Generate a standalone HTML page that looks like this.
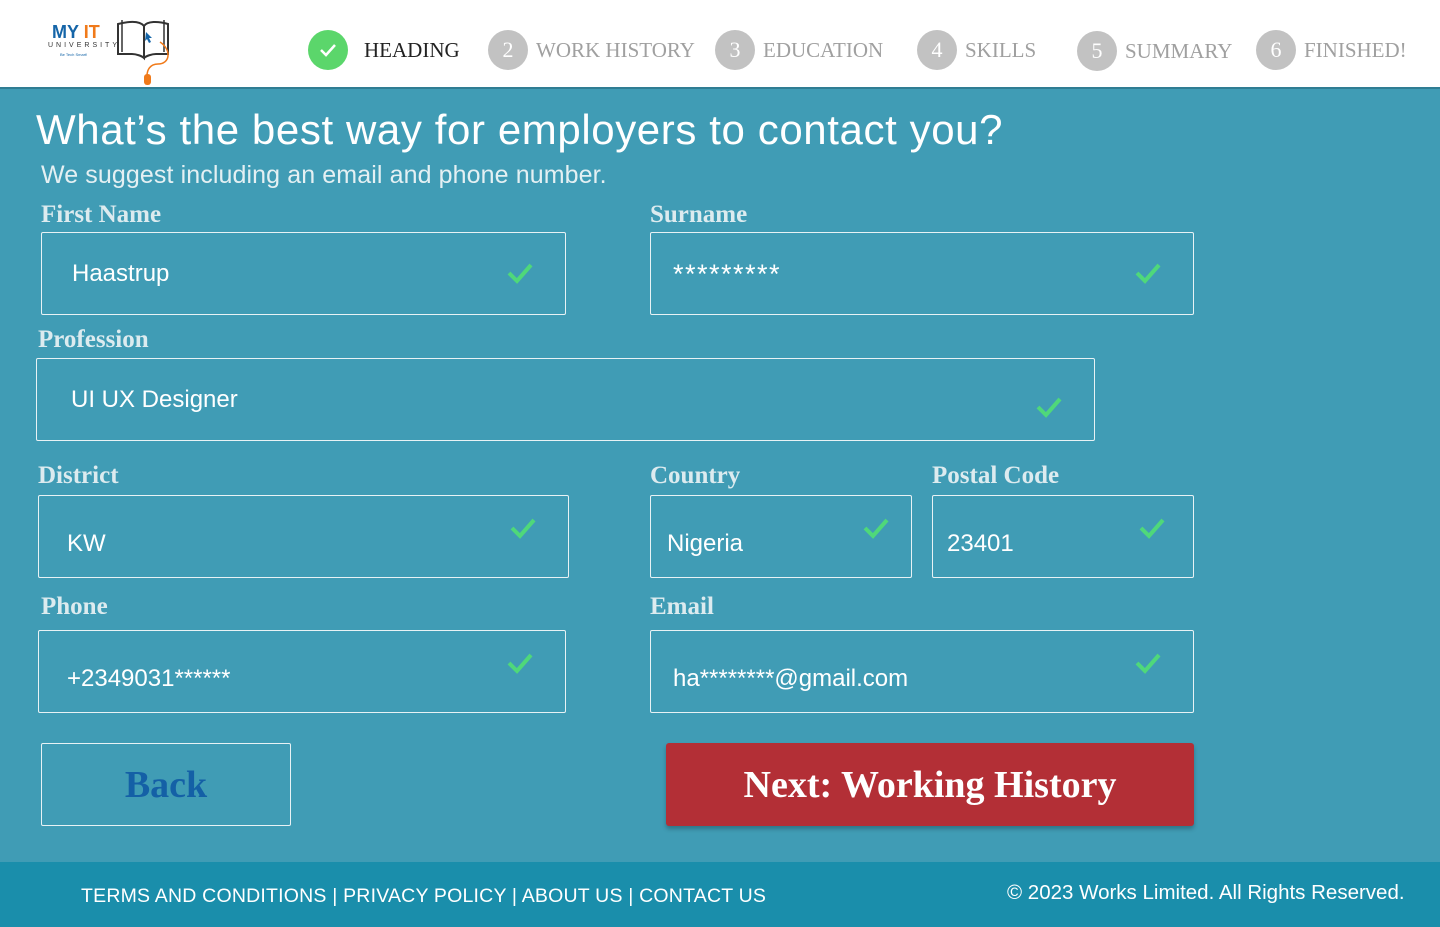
<!DOCTYPE html>
<html><head><style>
*{margin:0;padding:0;box-sizing:border-box}
body{width:1440px;height:927px;overflow:hidden;background:#409cb5;font-family:"Liberation Sans",sans-serif;position:relative}
.hdr{position:absolute;left:0;top:0;width:1440px;height:89px;background:#fff;border-bottom:2px solid #2f7d93}
.step{position:absolute;top:30px;height:40px;display:flex;align-items:center;font-family:"Liberation Serif",serif;font-size:21px;color:#a0a0a0}
.step .c{width:40px;height:40px;border-radius:50%;background:#c2c2c2;color:#fff;display:flex;align-items:center;justify-content:center;font-size:22px;margin-right:8px}
.abs{position:absolute}
.lbl{position:absolute;font-family:"Liberation Serif",serif;font-weight:bold;font-size:25px;color:#dcebef;margin-top:2px}
.in{position:absolute;border:1px solid #e8f2f5;border-radius:2px;color:#fff;font-size:24px;display:flex;align-items:center;padding-left:30px}
.ck{position:absolute;right:32px;top:50%;margin-top:-12px}
.foot{position:absolute;left:0;top:862px;width:1440px;height:65px;background:#1a8eab;color:#fff;font-size:20px}
</style></head><body>
<div class="hdr">
 <div class="abs" style="left:52px;top:22px;font-weight:bold;font-size:18px;color:#1565a8">MY <span style="color:#f07a1a">IT</span></div>
 <div class="abs" style="left:48px;top:42px;font-size:7px;letter-spacing:3px;color:#333">UNIVERSITY</div>
 <div class="abs" style="left:60px;top:52px;font-size:4px;color:#1565a8">Be Tech Smart!</div>
 <svg class="abs" style="left:115px;top:18px" width="60" height="70" viewBox="0 0 60 70"><path d="M3 6v30h14c4 0 10 2 12 4V8C25 3 15 3 3 6zM29 8c3-5 14-5 24-2v30H41c-4 0-10 2-12 4" fill="none" stroke="#333" stroke-width="2"/><path d="M7 2v32M49 2v32" stroke="#333" stroke-width="1.5"/><path d="M31 14l6 6-3 0 2 4-2 1-2-4-2 2z" fill="#1565a8"/><path d="M45 24c12 8 10 22 -2 22c-8 0-11 6-11 12" fill="none" stroke="#f07a1a" stroke-width="1.5"/><rect x="29" y="56" width="7" height="11" rx="3" fill="#f07a1a"/></svg>
 <div class="step" style="left:308px;color:#222"><div class="c" style="background:#5bd66b"><svg width="18" height="14"><path d="M2 7l5 5 9-10" stroke="#fff" stroke-width="2.5" fill="none"/></svg></div><span style="margin-left:8px">HEADING</span></div>
 <div class="step" style="left:488px"><div class="c">2</div>WORK HISTORY</div>
 <div class="step" style="left:715px"><div class="c">3</div>EDUCATION</div>
 <div class="step" style="left:917px"><div class="c">4</div>SKILLS</div>
 <div class="step" style="left:1077px;top:31px"><div class="c">5</div>SUMMARY</div>
 <div class="step" style="left:1256px"><div class="c">6</div>FINISHED!</div>
</div>
<div class="abs" style="left:36px;top:106px;font-size:42px;letter-spacing:0.6px;color:#fff">What’s the best way for employers to contact you?</div>
<div class="abs" style="left:41px;top:161px;font-size:25px;letter-spacing:0.1px;color:#e4f0f3">We suggest including an email and phone number.</div>

<div class="lbl" style="left:41px;top:199px">First Name</div>
<div class="in" style="left:41px;top:232px;width:525px;height:83px">Haastrup<svg class="ck" width="26" height="22"><path d="M2 11l8 8 14-16" stroke="#4fd87a" stroke-width="4" fill="none"/></svg></div>
<div class="lbl" style="left:650px;top:199px">Surname</div>
<div class="in" style="left:650px;top:232px;width:544px;height:83px;padding-left:22px;align-items:flex-start;padding-top:26px;font-size:27px;letter-spacing:1.5px">*********<svg class="ck" width="26" height="22"><path d="M2 11l8 8 14-16" stroke="#4fd87a" stroke-width="4" fill="none"/></svg></div>

<div class="lbl" style="left:38px;top:324px">Profession</div>
<div class="in" style="left:36px;top:358px;width:1059px;height:83px;padding-left:34px">UI UX Designer<svg class="ck" width="26" height="22" style="margin-top:-4px"><path d="M2 11l8 8 14-16" stroke="#4fd87a" stroke-width="4" fill="none"/></svg></div>

<div class="lbl" style="left:38px;top:460px">District</div>
<div class="in" style="left:38px;top:495px;width:531px;height:83px;padding-left:28px;padding-top:14px">KW<svg class="ck" width="26" height="22" style="margin-top:-20px"><path d="M2 11l8 8 14-16" stroke="#4fd87a" stroke-width="4" fill="none"/></svg></div>
<div class="lbl" style="left:650px;top:460px">Country</div>
<div class="in" style="left:650px;top:495px;width:262px;height:83px;padding-left:16px;padding-top:14px">Nigeria<svg class="ck" width="26" height="22" style="margin-top:-20px;right:22px"><path d="M2 11l8 8 14-16" stroke="#4fd87a" stroke-width="4" fill="none"/></svg></div>
<div class="lbl" style="left:932px;top:460px">Postal Code</div>
<div class="in" style="left:932px;top:495px;width:262px;height:83px;padding-left:14px;padding-top:14px">23401<svg class="ck" width="26" height="22" style="margin-top:-20px;right:28px"><path d="M2 11l8 8 14-16" stroke="#4fd87a" stroke-width="4" fill="none"/></svg></div>

<div class="lbl" style="left:41px;top:591px">Phone</div>
<div class="in" style="left:38px;top:630px;width:528px;height:83px;padding-left:28px;padding-top:14px">+2349031******<svg class="ck" width="26" height="22" style="margin-top:-20px"><path d="M2 11l8 8 14-16" stroke="#4fd87a" stroke-width="4" fill="none"/></svg></div>
<div class="lbl" style="left:650px;top:591px">Email</div>
<div class="in" style="left:650px;top:630px;width:544px;height:83px;padding-left:22px;padding-top:14px">ha********@gmail.com<svg class="ck" width="26" height="22" style="margin-top:-20px"><path d="M2 11l8 8 14-16" stroke="#4fd87a" stroke-width="4" fill="none"/></svg></div>

<div class="abs" style="left:41px;top:743px;width:250px;height:83px;border:1px solid #e8f2f5;border-radius:2px;display:flex;align-items:center;justify-content:center;font-family:'Liberation Serif',serif;font-weight:bold;font-size:38px;color:#1460a6">Back</div>
<div class="abs" style="left:666px;top:743px;width:528px;height:83px;background:#b32f36;border-radius:3px;box-shadow:0 3px 4px rgba(0,0,0,.25);display:flex;align-items:center;justify-content:center;font-family:'Liberation Serif',serif;font-weight:bold;font-size:38px;color:#fff">Next: Working History</div>

<div class="foot">
 <div class="abs" style="left:81px;top:23px;font-size:19.5px;letter-spacing:0.2px">TERMS AND CONDITIONS | PRIVACY POLICY | ABOUT US | CONTACT US</div>
 <div class="abs" style="left:1007px;top:19px;font-size:20.5px">© 2023 Works Limited. All Rights Reserved.</div>
</div>
</body></html>
